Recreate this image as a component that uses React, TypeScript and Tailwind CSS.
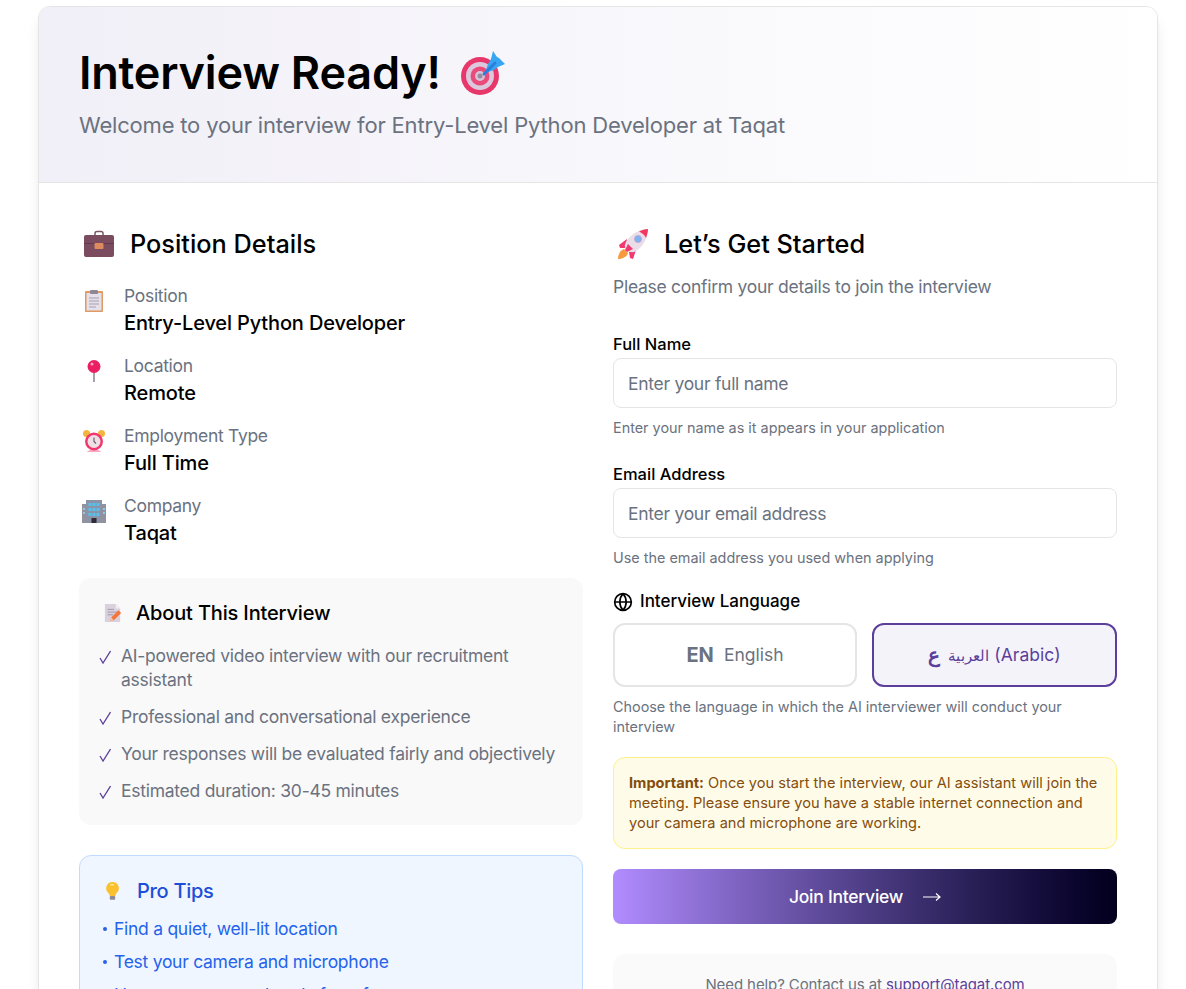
const font = "font-['Inter','Liberation_Sans',sans-serif]";

function TargetIcon({ className }: { className?: string }) {
  return (
    <svg viewBox="0 0 48 48" className={className} aria-hidden>
      <circle cx="22" cy="27" r="19" fill="#e8386b" />
      <circle cx="22" cy="27" r="14" fill="#dcc8dc" />
      <circle cx="22" cy="27" r="9.500" fill="#ea4b7a" />
      <circle cx="22" cy="27" r="5" fill="#d6c4d8" />
      <circle cx="22" cy="27" r="2.500" fill="#9a8a9e" />
      <path d="M27 24 30 15 33 10 35 2 39 8 41 9 47 15 40 18 36 21Z" fill="#38a5f2" />
      <path d="M26 25 37 14" stroke="#2a7fdc" strokeWidth="3" strokeLinecap="round" />
    </svg>
  );
}

function BriefcaseIcon({ className }: { className?: string }) {
  return (
    <svg viewBox="0 0 32 28" className={className} aria-hidden>
      <path d="M12 6V3.500A2 2 0 0 1 14 1.500h4a2 2 0 0 1 2 2V6" fill="none" stroke="#7a5468" strokeWidth="1.500" />
      <rect x="1" y="5" width="30" height="22" rx="2" fill="#7b4b60" />
      <path d="M1 13h30v1H1z" fill="#63394d" />
      <rect x="11.500" y="13" width="9" height="6" rx="1" fill="#dd8a5e" />
    </svg>
  );
}

function ClipboardIcon({ className }: { className?: string }) {
  return (
    <svg viewBox="0 0 20 24" className={className} aria-hidden>
      <rect x="1" y="2" width="18" height="21" rx="1" fill="#dd9a62" />
      <rect x="2.500" y="4" width="15" height="17.500" fill="#e6e0ea" />
      <rect x="6" y="1" width="8" height="4" rx="1" fill="#8f8796" />
      <path d="M5 9h10M5 12h10M5 15h10M5 18h7" stroke="#a69fb0" strokeWidth="1" />
    </svg>
  );
}

function PinIcon({ className }: { className?: string }) {
  return (
    <svg viewBox="0 0 16 24" className={className} aria-hidden>
      <rect x="7" y="10" width="2" height="13" fill="#a7a0aa" />
      <circle cx="8" cy="7.500" r="6.500" fill="#ea1f63" />
      <circle cx="6" cy="5" r="1.500" fill="#f9a0c0" />
    </svg>
  );
}

function ClockIcon({ className }: { className?: string }) {
  return (
    <svg viewBox="0 0 24 24" className={className} aria-hidden>
      <circle cx="4.500" cy="4.500" r="3.500" fill="#f4b53e" />
      <circle cx="19.500" cy="4.500" r="3.500" fill="#f4b53e" />
      <path d="M5 23c1-3 13-3 14 0z" fill="#f7a7c3" />
      <circle cx="12" cy="12.500" r="9" fill="#f1386e" />
      <circle cx="12" cy="12.500" r="6.500" fill="#efe0e6" />
      <path d="M12 8.500v4l2 2" fill="none" stroke="#6e5f70" strokeWidth="1.200" />
    </svg>
  );
}

function BuildingIcon({ className }: { className?: string }) {
  return (
    <svg viewBox="0 0 24 24" className={className} aria-hidden>
      <rect x="0" y="5" width="24" height="19" fill="#93919d" />
      <rect x="4" y="1" width="16" height="23" fill="#8b93a6" />
      <path d="M6.500 4h3v3h-3zM10.500 4h3v3h-3zM14.500 4h3v3h-3zM6.500 9h3v3h-3zM10.500 9h3v3h-3zM14.500 9h3v3h-3zM6.500 14h3v3h-3zM10.500 14h3v3h-3zM14.500 14h3v3h-3z" fill="#56c0ee" />
      <path d="M1 9h2v2H1zM1 13h2v2H1zM21 9h2v2h-2zM21 13h2v2h-2z" fill="#8fc9e6" />
      <rect x="9.500" y="19" width="5" height="5" fill="#2f2a33" />
    </svg>
  );
}

function MemoIcon({ className }: { className?: string }) {
  return (
    <svg viewBox="0 0 20 22" className={className} aria-hidden>
      <path d="M1 1h12l5 5v15H1z" fill="#d9d2de" />
      <path d="M13 1v5h5z" fill="#f1edf3" />
      <path d="M4 7h7M4 10h10M4 13h6" stroke="#9b93a3" strokeWidth="1" />
      <path d="M7 20l1-4 8-8 3 3-8 8z" fill="#f4743a" />
      <path d="M7 20l1-4 3 3z" fill="#f7c9a8" />
    </svg>
  );
}

function BulbIcon({ className }: { className?: string }) {
  return (
    <svg viewBox="0 0 16 22" className={className} aria-hidden>
      <path d="M8 1a7 7 0 0 0-4.500 12.300c1 1 1.500 2 1.500 3.200h6c0-1.200.5-2.200 1.500-3.200A7 7 0 0 0 8 1z" fill="#fbc02d" />
      <path d="M5.500 4.500a4 4 0 0 1 4 0" fill="none" stroke="#fff0a8" strokeWidth="1.500" />
      <rect x="5" y="16.500" width="6" height="4" rx="1" fill="#8f8a9b" />
    </svg>
  );
}

function RocketIcon({ className }: { className?: string }) {
  return (
    <svg viewBox="0 0 32 32" className={className} aria-hidden>
      <path d="M7 21C3 22 1 27 1 31C5 31 10 29 11 25Z" fill="#f79a3e" />
      <path d="M10 11 2 17 3 20 9 20Z" fill="#f0396f" />
      <path d="M19 22 16 31 13 30 12 24Z" fill="#f0396f" />
      <path d="M31 1C24 1 14 5 9 14C7 18 8 20 9 22L11 23C13 24 16 25 19 23C27 18 31 8 31 1Z" fill="#eadde8" />
      <path d="M31 1C28 1 25 2 22 3.500C25 5 28 7 29 10C30 7 31 4 31 1Z" fill="#f4375f" />
      <path d="M11 16 16 21 10 24 8 22Z" fill="#f0396f" />
      <circle cx="21" cy="11" r="3.500" fill="#7db3f2" stroke="#bfa8d0" />
    </svg>
  );
}

function GlobeIcon({ className }: { className?: string }) {
  return (
    <svg viewBox="0 0 24 24" fill="none" stroke="currentColor" strokeWidth="2" className={className} aria-hidden>
      <circle cx="12" cy="12" r="10" />
      <path d="M2 12h20M12 2a15 15 0 0 1 0 20M12 2a15 15 0 0 0 0 20" />
    </svg>
  );
}

function DetailRow({ label, value, children }: { label: string; value: string; children: React.ReactNode }) {
  return (
    <div className="flex gap-[15px]">
      <div className="flex w-[30px] shrink-0 justify-center pt-[7px]">{children}</div>
      <div>
        <p className="h-[28px] text-[17.500px] leading-[28px] tracking-[-0.3px] text-[#6b7280]">{label}</p>
        <p className="h-[27px] text-[20px] leading-[27px] font-medium tracking-[-0.15px] text-black">{value}</p>
      </div>
    </div>
  );
}

const points = [
  "AI-powered video interview with our recruitment assistant",
  "Professional and conversational experience",
  "Your responses will be evaluated fairly and objectively",
  "Estimated duration: 30-45 minutes",
];

const tips = ["Find a quiet, well-lit location", "Test your camera and microphone", "Have your resume handy for reference"];

function Field({ label, placeholder, hint }: { label: string; placeholder: string; hint: string }) {
  return (
    <div>
      <label className="block h-[24px] text-[16.500px] leading-[24px] font-medium text-black">{label}</label>
      <input
        placeholder={placeholder}
        className="mt-[2px] block h-[50px] w-full rounded-lg border border-[#e5e5e5] px-[14px] text-[17.500px] tracking-[-0.28px] outline-none placeholder:text-[#6b7280]"
      />
      <p className="mt-[10px] text-[14.400px] leading-[20px] text-[#6b7280]">{hint}</p>
    </div>
  );
}

export default function App() {
  return (
    <div className={`h-[989px] overflow-hidden bg-white pt-[6px] ${font}`}>
      <div className="ml-[38px] w-[1120px] overflow-hidden rounded-xl border border-[#e5e5e5] bg-white shadow-lg">
        <header className="h-[176px] border-b border-[#e5e5e5] bg-gradient-to-r from-[#f1eff7] to-white px-10 pt-[37px]">
          <h1 className="flex items-center gap-[17px] text-[45px] leading-[58px] font-semibold tracking-[-0.2px] text-black">
            Interview Ready!
            <TargetIcon className="h-[48px] w-[48px]" />
          </h1>
          <p className="mt-[7px] text-[22px] leading-[32px] tracking-[-0.18px] text-[#6b7280]">
            Welcome to your interview for Entry-Level Python Developer at Taqat
          </p>
        </header>

        <div className="grid grid-cols-2 gap-[30px] px-10 pt-[42px]">
          <section>
            <h2 className="flex h-[38px] items-center gap-[15px] pl-[4px] text-[25.300px] font-[550] text-black">
              <BriefcaseIcon className="h-[28px] w-[32px]" />
              Position Details
            </h2>
            <div className="mt-[19px] flex flex-col gap-[15px]">
              <DetailRow label="Position" value="Entry-Level Python Developer">
                <ClipboardIcon className="h-[24px] w-[20px]" />
              </DetailRow>
              <DetailRow label="Location" value="Remote">
                <PinIcon className="h-[24px] w-[16px]" />
              </DetailRow>
              <DetailRow label="Employment Type" value="Full Time">
                <ClockIcon className="h-[24px] w-[24px]" />
              </DetailRow>
              <DetailRow label="Company" value="Taqat">
                <BuildingIcon className="h-[24px] w-[24px]" />
              </DetailRow>
            </div>

            <div className="mt-[31px] rounded-xl bg-[#f9f9f9] px-5 pt-[21px] pb-[22px]">
              <h3 className="flex h-[28px] items-center gap-[14px] pl-[5px] text-[20px] font-[550] tracking-[-0.15px] text-black">
                <MemoIcon className="h-[20px] w-[18px]" />
                About This Interview
              </h3>
              <ul className="mt-[17px] flex flex-col gap-[13px]">
                {points.map((p) => (
                  <li key={p} className="flex gap-[10px] text-[17.500px] leading-[24px] tracking-[-0.26px] text-[#6b7280]">
                    <svg viewBox="0 0 12 14" fill="none" stroke="#5b3f9b" strokeWidth="1.300" className="mt-[6px] h-[14px] w-[12px] shrink-0" aria-hidden>
                      <path d="M1 8 4 13 11.500 1" />
                    </svg>
                    <span>{p}</span>
                  </li>
                ))}
              </ul>
            </div>

            <div className="mt-[30px] rounded-xl border border-[#bfdbfe] bg-[#eff6ff] px-[22px] pt-[21px] pb-6">
              <h3 className="flex h-[28px] items-center gap-[17px] pl-[3px] text-[20px] font-[550] tracking-[-0.3px] text-[#1d4ed8]">
                <BulbIcon className="h-[20px] w-[15px]" />
                Pro Tips
              </h3>
              <ul className="mt-[11px] flex flex-col gap-[8px]">
                {tips.map((t) => (
                  <li key={t} className="flex items-center gap-[7px] pl-[1px] text-[17.500px] leading-[25px] tracking-[-0.27px] text-[#2563eb]">
                    <span className="h-[4px] w-[4px] shrink-0 rounded-full bg-[#2563eb]" />
                    {t}
                  </li>
                ))}
              </ul>
            </div>
          </section>

          <section>
            <h2 className="flex h-[38px] items-center gap-[15px] pl-[4px] text-[25.300px] font-[550] text-black">
              <RocketIcon className="h-[32px] w-[32px]" />
              Let’s Get Started
            </h2>
            <p className="mt-[12px] text-[17.500px] leading-[24px] tracking-[-0.27px] text-[#6b7280]">
              Please confirm your details to join the interview
            </p>

            <div className="mt-[33px] flex flex-col gap-[24px]">
              <Field label="Full Name" placeholder="Enter your full name" hint="Enter your name as it appears in your application" />
              <Field label="Email Address" placeholder="Enter your email address" hint="Use the email address you used when applying" />
            </div>

            <div className="mt-[22px] flex h-[24px] items-center gap-[7px] text-[17px] font-medium text-black">
              <GlobeIcon className="h-[20px] w-[20px]" />
              Interview Language
            </div>
            <div className="mt-[9px] grid grid-cols-[244px_1fr] gap-[15px]">
              <button className="flex h-[64px] items-center justify-center gap-[10px] rounded-xl border-2 border-[#e5e5e5] text-[17.500px] text-[#6b7280]">
                <span className="text-[20px] font-bold">EN</span>
                English
              </button>
              <button className="flex h-[64px] items-center justify-center gap-[8px] rounded-xl border-2 border-[#5b3f9b] bg-[#f5f3fa] text-[17.500px] text-[#5b3f9b]">
                <span className="text-[20px] font-bold">ع</span>
                <span>
                  <span className="text-[15px]">العربية</span> (Arabic)
                </span>
              </button>
            </div>
            <p className="mt-[10px] text-[14.400px] leading-[20px] text-[#6b7280]">
              Choose the language in which the AI interviewer will conduct your interview
            </p>

            <div className="mt-[20px] rounded-xl border border-[#fef08a] bg-[#fefce8] px-[15px] py-[15px] text-[14.600px] leading-[20px] text-[#854d0e]">
              <strong className="font-bold">Important:</strong> Once you start the interview, our AI assistant will join the
              meeting. Please ensure you have a stable internet connection and your camera and microphone are working.
            </div>

            <button className="mt-[20px] flex h-[55px] w-full items-center justify-center gap-[20px] rounded-lg bg-gradient-to-r from-[#b18cff] to-[#03001e] pt-[1px] text-[17.500px] font-medium tracking-[-0.25px] text-white">
              Join Interview
              <svg viewBox="0 0 18 10" fill="none" stroke="currentColor" strokeWidth="1.200" className="h-[10px] w-[18px]" aria-hidden>
                <path d="M0 5h17M13 1.500 17 5 13 8.500" />
              </svg>
            </button>

            <div className="mt-[30px] rounded-xl bg-[#fafafa] px-6 py-[21px] text-center text-[15px] leading-[20px] tracking-[-0.1px] text-[#6b7280]">
              Need help? Contact us at <span className="text-[#5b3f9b]">support@taqat.com</span>
            </div>
          </section>
        </div>
      </div>
    </div>
  );
}
